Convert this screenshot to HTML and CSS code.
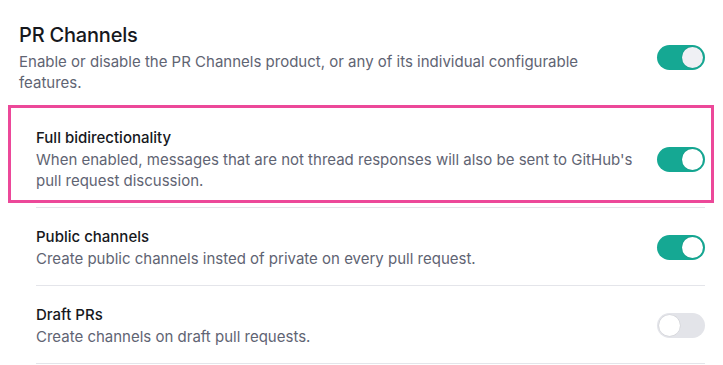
FILE: index.html
```html
<!DOCTYPE html>
<html lang="en">
<head>
  <meta charset="UTF-8">
  <meta name="viewport" content="width=device-width, initial-scale=1.0">
  <title>PR Channels settings</title>
  <link rel="stylesheet" href="styles.css">
</head>
<body>
  <div class="settings">
    <header class="section-header">
      <div class="section-text">
        <h1 class="section-title">PR Channels</h1>
        <p class="section-desc">Enable or disable the PR Channels product, or any of its individual configurable features.</p>
      </div>
      <span class="toggle toggle-on toggle-muted"><span class="thumb"></span></span>
    </header>

    <div class="option-list">
      <div class="option highlighted">
        <div class="option-text">
          <div class="option-title">Full bidirectionality</div>
          <p class="option-desc">When enabled, messages that are not thread responses will also be sent to GitHub's pull request discussion.</p>
        </div>
        <span class="toggle toggle-on"><span class="thumb"></span></span>
      </div>

      <div class="option">
        <div class="option-text">
          <div class="option-title">Public channels</div>
          <p class="option-desc">Create public channels insted of private on every pull request.</p>
        </div>
        <span class="toggle toggle-on"><span class="thumb"></span></span>
      </div>

      <div class="option">
        <div class="option-text">
          <div class="option-title">Draft PRs</div>
          <p class="option-desc">Create channels on draft pull requests.</p>
        </div>
        <span class="toggle"><span class="thumb"></span></span>
      </div>
    </div>
  </div>
</body>
</html>
```

FILE: styles.css
```css
:root {
  --text-strong: #16181d;
  --text-muted: #5f6473;
  --divider: #e4e5ea;
  --teal: #15a893;
  --track-off: #e3e4e9;
  --highlight: #ec4899;
}

body {
  margin: 0;
  background: #ffffff;
  font-family: 'Inter', 'Noto Sans', sans-serif;
  color: var(--text-strong);
}

.settings {
  padding: 21px 18px 0 19px;
}

.section-header {
  display: flex;
  align-items: center;
  justify-content: space-between;
  margin-bottom: 16px;
}

.section-title {
  margin: 0;
  font-size: 20px;
  line-height: 28px;
  font-weight: 500;
  letter-spacing: -0.2px;
}

.section-desc {
  margin: 2px 0 0;
  max-width: 600px;
  font-size: 15px;
  line-height: 21px;
  color: var(--text-muted);
}

.option-list {
  margin-left: 17px;
}

.option {
  position: relative;
  display: flex;
  align-items: center;
  justify-content: space-between;
  padding: 18px 0 16px;
  border-bottom: 1px solid var(--divider);
}

/* annotation box around the first option */
.option.highlighted::after {
  content: '';
  position: absolute;
  top: -4px;
  bottom: 4px;
  left: -28px;
  right: -9px;
  border: 3px solid var(--highlight);
  pointer-events: none;
}

.option-title {
  font-size: 15px;
  line-height: 21px;
  font-weight: 500;
}

.option-desc {
  margin: 1px 0 0;
  max-width: 600px;
  font-size: 15px;
  line-height: 21px;
  color: var(--text-muted);
}

.toggle {
  flex-shrink: 0;
  display: flex;
  align-items: center;
  width: 48px;
  height: 25px;
  padding: 0 2px;
  box-sizing: border-box;
  border-radius: 13px;
  background: var(--track-off);
}

.toggle .thumb {
  width: 21px;
  height: 21px;
  border-radius: 50%;
  background: #ffffff;
  box-shadow: 0 0 0 0.5px rgba(0, 0, 0, 0.08);
}

.toggle-on {
  justify-content: flex-end;
  background: var(--teal);
}

.toggle-muted .thumb {
  background: #eff0f4;
}
```
